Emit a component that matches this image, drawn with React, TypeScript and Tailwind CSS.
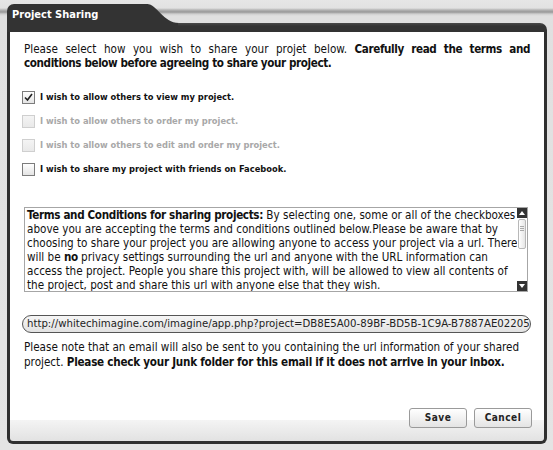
import React from 'react';

const font = "font-['DejaVu_Sans_Condensed','DejaVu_Sans',sans-serif]";

function Checkbox({ checked, disabled }: { checked?: boolean; disabled?: boolean }) {
  return (
    <span
      className={`flex h-[13px] w-[13px] shrink-0 items-center justify-center border ${
        disabled
          ? 'border-[#cfcfcf] bg-[linear-gradient(to_bottom,#f4f4f4,#e9e9e9)]'
          : 'border-[#7c7c7c] bg-[linear-gradient(to_bottom,#ffffff,#e4e4e4)]'
      }`}
    >
      {checked && (
        <svg width="9" height="9" viewBox="0 0 9 9">
          <path d="M1 4.5 L3.5 7 L8 1" fill="none" stroke="#222" strokeWidth="1.6" />
        </svg>
      )}
    </span>
  );
}

export default function App() {
  const options = [
    { label: 'I wish to allow others to view my project.', checked: true },
    { label: 'I wish to allow others to order my project.', disabled: true },
    { label: 'I wish to allow others to edit and order my project.', disabled: true },
    { label: 'I wish to share my project with friends on Facebook.' },
  ];

  return (
    <div
      className={`h-[450px] w-[553px] overflow-hidden bg-[linear-gradient(to_bottom,#e6e6e6_0px,#e2e2e2_8px,#b4b4b4_10px,#989898_12px,#cfcfcf_14px,#e0e0e0_16px,#e4e4e4_100%)] pl-[7px] pt-[4px] ${font}`}
    >
      <div className="flex h-[440px] w-[540px] flex-col">
        {/* title bar */}
        <div className="flex h-[28px] items-end">
          <div className="h-[28px] w-[141px] rounded-tl-[7px] bg-[#333333] pl-[5px] pt-[4px] text-[11px] font-bold leading-[14px] text-white">
            Project Sharing
          </div>
          <svg width="32" height="28" viewBox="0 0 32 28" className="-ml-px block">
            <path d="M0 0 C10 0 16 19 32 19 L32 28 L0 28 Z" fill="#333333" />
          </svg>
          <div className="-ml-px h-[9px] flex-1 rounded-tr-[7px] bg-[linear-gradient(to_bottom,#4a4a4a,#333333_3px)]" />
        </div>

        {/* body */}
        <div className="flex flex-1 flex-col rounded-b-[6px] border-[3px] border-t-0 border-[#2f2f2f] bg-[linear-gradient(to_bottom,#ffffff_0px,#ffffff_388px,#f4f4f4_388px,#e2e2e2_100%)] px-[14px] pt-[10px] text-[11.6px] leading-[14px] text-[#111]">
          <div>
            <div className="text-justify [text-align-last:justify]">
              Please select how you wish to share your projet below.{' '}
              <b className="tracking-[-0.4px]">Carefully read the terms and</b>
            </div>
            <div className="font-bold tracking-[-0.4px]">conditions below before agreeing to share your project.</div>
          </div>

          <div className="mt-[15px] flex flex-col">
            {options.map((o) => (
              <label key={o.label} className="-ml-[2px] flex h-[24px] items-center gap-[5px]">
                <Checkbox checked={o.checked} disabled={o.disabled} />
                <span className={`text-[9.25px] font-bold ${o.disabled ? 'text-[#a8a8a8]' : 'text-[#111]'}`}>{o.label}</span>
              </label>
            ))}
          </div>

          {/* terms box */}
          <div className="mt-[26px] flex h-[85px] w-[504px] border border-[#a6a6a6] bg-white">
            <div className="flex-1 overflow-hidden whitespace-nowrap pl-[2px] leading-[14px]">
              <div>
                <b className="tracking-[-0.35px]">Terms and Conditions for sharing projects:</b> By selecting one, some or
                all of the checkboxes
              </div>
              <div>above you are accepting the terms and conditions outlined below.Please be aware that by</div>
              <div>choosing to share your project you are allowing anyone to access your project via a url. There</div>
              <div>
                will be <b className="tracking-[-0.35px]">no</b> privacy settings surrounding the url and anyone with the URL
                information can
              </div>
              <div>access the project. People you share this project with, will be allowed to view all contents of</div>
              <div>the project, post and share this url with anyone else that they wish.</div>
            </div>
            <div className="flex w-[10px] flex-col bg-white">
              <div className="flex h-[10px] items-center justify-center bg-[#333]">
                <svg width="6" height="4" viewBox="0 0 6 4">
                  <path d="M0 4 L3 0 L6 4 Z" fill="#fff" />
                </svg>
              </div>
              <div className="flex-1 px-px pt-[1px]">
                <div className="flex h-[30px] flex-col items-center gap-[1px] rounded-[2px] border border-[#b8b8b8] bg-[linear-gradient(to_right,#ffffff,#e6e6e6)] pt-[6px]">
                  <span className="h-px w-[4px] bg-[#aaa]" />
                  <span className="h-px w-[4px] bg-[#aaa]" />
                  <span className="h-px w-[4px] bg-[#aaa]" />
                </div>
              </div>
              <div className="flex h-[10px] items-center justify-center bg-[#333]">
                <svg width="6" height="4" viewBox="0 0 6 4">
                  <path d="M0 0 L6 0 L3 4 Z" fill="#fff" />
                </svg>
              </div>
            </div>
          </div>

          {/* url */}
          <div className="-ml-[2px] mt-[23px] flex h-[18px] w-[509px] items-center overflow-hidden whitespace-nowrap rounded-full border border-[#555] bg-[linear-gradient(to_bottom,#f6f6f6,#e2e2e2)] pl-[4px] text-[11.3px] text-[#222]">
            http://whitechimagine.com/imagine/app.php?project=DB8E5A00-89BF-BD5B-1C9A-B7887AE02205
          </div>

          <div className="mt-[7px] leading-[15px]">
            <div className="whitespace-nowrap">
              Please note that an email will also be sent to you containing the url information of your shared
            </div>
            <div className="whitespace-nowrap">
              project.{' '}
              <b className="tracking-[-0.25px]">Please check your Junk folder for this email if it does not arrive in your inbox.</b>
            </div>
          </div>

          <div className="-mr-[2px] mb-[13px] mt-auto flex justify-end gap-[7px]">
            <button className="h-[20px] w-[58px] rounded-[3px] border border-[#9a9a9a] bg-[linear-gradient(to_bottom,#ffffff,#e4e4e4)] text-[10px] font-bold tracking-[0.5px] text-[#222]">
              Save
            </button>
            <button className="h-[20px] w-[58px] rounded-[3px] border border-[#9a9a9a] bg-[linear-gradient(to_bottom,#ffffff,#e4e4e4)] text-[10px] font-bold tracking-[0.5px] text-[#222]">
              Cancel
            </button>
          </div>
        </div>
      </div>
    </div>
  );
}
